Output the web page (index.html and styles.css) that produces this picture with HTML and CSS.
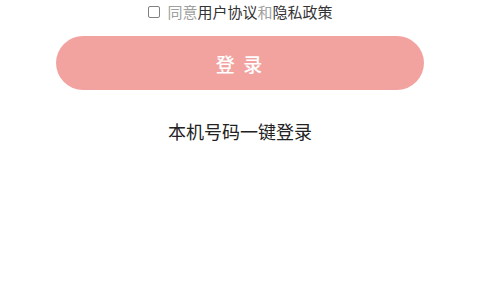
FILE: index.html
```html
<!DOCTYPE html>
<html lang="zh-CN">
<head>
    <meta charset="UTF-8">
    <meta name="viewport" content="width=device-width, initial-scale=1.0">
    <title>登录</title>
    <link rel="stylesheet" href="styles.css">
</head>
<body>

<div class="login-page">
    <label class="agreement">
        <span class="checkbox"></span>
        <span class="muted">同意</span><span class="link">用户协议</span><span class="muted">和</span><span class="link">隐私政策</span>
    </label>

    <button class="login-btn">登 录</button>

    <div class="quick-login">本机号码一键登录</div>
</div>

</body>
</html>
```

FILE: styles.css
```css
body {
    margin: 0;
    padding: 0;
    background-color: #fff;
    font-family: 'Noto Sans CJK SC', 'Noto Sans', sans-serif;
}

.login-page {
    width: 480px;
    display: flex;
    flex-direction: column;
    align-items: center;
}

.agreement {
    display: flex;
    align-items: center;
    height: 24px;
    font-size: 15px;
    line-height: 24px;
}

.checkbox {
    width: 10px;
    height: 10px;
    border: 1.5px solid #808080;
    border-radius: 2px;
    margin-right: 7px;
    margin-left: 1px;
    box-sizing: content-box;
}

.muted {
    color: #a0a0a0;
}

.link {
    color: #333;
}

.login-btn {
    margin-top: 12px;
    width: 368px;
    height: 54px;
    border: none;
    border-radius: 27px;
    background-color: #f2a3a0;
    color: #fff;
    font-family: inherit;
    font-size: 19px;
    font-weight: 500;
    letter-spacing: 2px;
    cursor: pointer;
}

.quick-login {
    margin-top: 29px;
    font-size: 18px;
    line-height: 24px;
    color: #222;
}
```
